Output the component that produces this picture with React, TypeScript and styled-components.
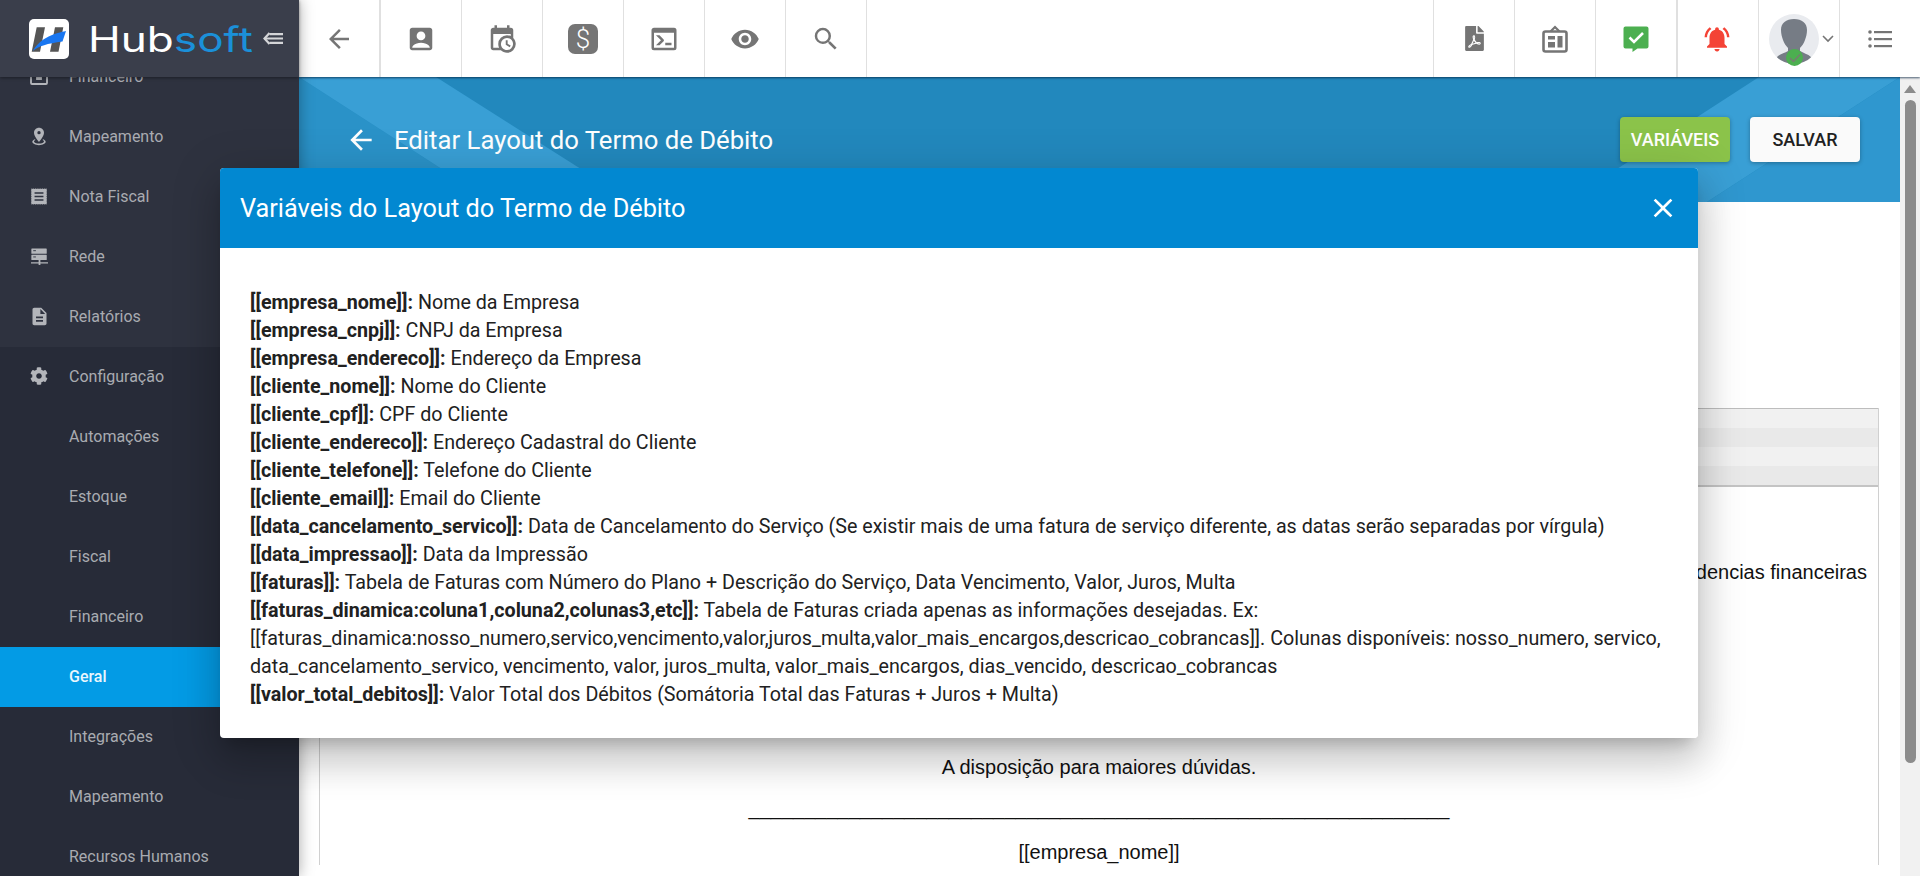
import styled, { createGlobalStyle } from 'styled-components';
import { MdAccountBox, MdArrowBack, MdClose, MdDescription, MdNotificationsActive, MdSearch, MdVisibility } from 'react-icons/md';
import { FaCog, FaFilePdf } from 'react-icons/fa';

const GlobalStyle = createGlobalStyle`
  html, body { margin: 0; padding: 0; height: 100%; background: #fff; overflow: hidden; }
  body { font-family: Roboto, "Liberation Sans", sans-serif; }
  * { box-sizing: border-box; }
`;

const Shell = styled.div`
  display: flex;
  width: 100vw;
  height: 100vh;
  overflow: hidden;
`;

/* ---------- sidebar ---------- */
const Sidebar = styled.aside`
  width: 299px;
  flex: none;
  display: flex;
  flex-direction: column;
  background: #272b38;
  box-shadow: 0 0 14px rgba(0, 0, 0, 0.35);
  position: relative;
  z-index: 3;
`;

const Brand = styled.div`
  height: 77px;
  flex: none;
  display: flex;
  align-items: center;
  gap: 19px;
  padding-left: 29px;
  background: #3a3e4b;
  box-shadow: 0 1px 3px rgba(0, 0, 0, 0.4);
  position: relative;
  z-index: 1;
`;

const LogoMark = styled.svg`
  width: 40px;
  height: 40px;
  flex: none;
`;

const Wordmark = styled.div`
  width: 164px;
  flex: none;
  font-family: Inter, sans-serif;
  font-size: 35px;
  font-weight: 400;
  line-height: 40px;
  color: #fff;
  white-space: nowrap;
  transform: scaleX(1.26);
  transform-origin: left center;
  margin-right: -8px;
  span { color: #1b90d9; }
`;

const NavScroll = styled.nav`
  flex: 1;
  overflow: hidden;
`;

const NavList = styled.ul`
  list-style: none;
  margin: -30px 0 0;
  padding: 0;
`;

const NavRow = styled.li<{ $raised?: boolean; $active?: boolean }>`
  height: 60px;
  display: flex;
  align-items: center;
  gap: 18px;
  padding: 0 0 2px 27px;
  font-size: 16px;
  color: ${({ $active }) => ($active ? '#eaf6fd' : '#a9abb1')};
  font-weight: ${({ $active }) => ($active ? 500 : 400)};
  background: ${({ $active, $raised }) => ($active ? '#039be5' : $raised ? '#2e323f' : '#272b38')};
`;

const NavIcon = styled.span`
  width: 24px;
  height: 24px;
  flex: none;
  display: flex;
  align-items: center;
  justify-content: center;
  color: #b3b5ba;
`;

/* ---------- top bar ---------- */
const Main = styled.div`
  flex: 1;
  min-width: 0;
  display: flex;
  flex-direction: column;
`;

const TopBar = styled.header`
  height: 77px;
  flex: none;
  display: flex;
  justify-content: space-between;
  background: #fff;
  box-shadow: 0 1px 2px rgba(0, 30, 60, 0.7);
  position: relative;
  z-index: 2;
`;

const BarGroup = styled.div`
  display: flex;
`;

const BarCell = styled.div<{ $side?: 'left' | 'right'; $wide?: boolean }>`
  width: ${({ $wide }) => ($wide ? 82 : 81)}px;
  height: 77px;
  display: flex;
  align-items: center;
  justify-content: center;
  color: #757575;
  ${({ $side, $wide }) =>
    $side === 'right'
      ? `border-left: ${$wide ? 2 : 1}px solid #e0e0e0;`
      : `border-right: ${$wide ? 2 : 1}px solid #e0e0e0;`}
`;

const BellSlot = styled.span`
  display: flex;
  margin-right: 3px;
`;

const DollarBadge = styled.span`
  width: 30px;
  height: 30px;
  border-radius: 7px;
  background: #757575;
  color: #fff;
  font-size: 26px;
  font-weight: 300;
  line-height: 30px;
  text-align: center;
`;

const AvatarCell = styled(BarCell)`
  position: relative;
  justify-content: flex-start;
  padding-left: 10px;
  gap: 2px;
`;

const AvatarDisc = styled.svg`
  width: 50px;
  height: 50px;
  border-radius: 50%;
  background: #e9ebef;
  flex: none;
`;

const OnlineBadge = styled.span`
  position: absolute;
  left: 27px;
  top: 49px;
  width: 17px;
  height: 17px;
  border-radius: 50%;
  background: #4caf50;
  display: flex;
  align-items: center;
  justify-content: center;
`;

/* ---------- page ---------- */
const Viewport = styled.div`
  flex: 1;
  min-height: 0;
  display: flex;
`;

const Page = styled.main`
  flex: 1;
  min-width: 0;
  overflow: hidden;
`;

const Banner = styled.section`
  height: 125px;
  display: flex;
  align-items: center;
  padding: 0 40px 0 46px;
  background: #2288bd;
  color: #fff;
  position: relative;
`;

const BannerArt = styled.svg`
  position: absolute;
  inset: 0;
  width: 100%;
  height: 100%;
`;

const BannerTitle = styled.h1`
  flex: 1;
  margin: 0;
  display: flex;
  align-items: center;
  gap: 17px;
  font-size: 25.7px;
  font-weight: 400;
  position: relative;
`;

const BannerActions = styled.div`
  display: flex;
  gap: 20px;
  position: relative;
`;

const ActionButton = styled.button<{ $tone: 'green' | 'white' }>`
  width: 110px;
  height: 45px;
  border: 0;
  border-radius: 4px;
  padding: 0;
  font-family: Roboto, sans-serif;
  font-size: 18px;
  font-weight: 500;
  text-transform: uppercase;
  color: ${({ $tone }) => ($tone === 'green' ? '#fff' : '#212121')};
  background: ${({ $tone }) => ($tone === 'green' ? '#8bc34a' : '#fafafa')};
  box-shadow: 0 1px 4px rgba(0, 0, 0, 0.3);
`;

const Editor = styled.section`
  margin: 206px 21px 0 20px;
  border: 1px solid #d0d0d0;
  border-bottom: 0;
  font-family: "Liberation Sans", Arial, sans-serif;
  font-size: 20px;
  line-height: 26px;
  color: #111;
`;

const EditorTools = styled.div`
  height: 79px;
  display: flex;
  flex-direction: column;
  border-top: 1px solid #bdbdbd;
  border-bottom: 2px solid #c4c4c4;
  margin-top: -1px;
`;

const ToolStripe = styled.div<{ $dark?: boolean }>`
  flex: 1;
  background: ${({ $dark }) => ($dark ? '#e9e9e9' : '#f1f1f1')};
`;

const EditorBody = styled.div`
  padding: 72px 11px 0;
`;

const Paragraph = styled.p<{ $align?: 'center' | 'right'; $gap?: number }>`
  margin: ${({ $gap }) => $gap ?? 0}px 0 0;
  text-align: ${({ $align }) => $align ?? 'center'};
  white-space: nowrap;
`;

const ScrollTrack = styled.div`
  width: 20px;
  flex: none;
  display: flex;
  flex-direction: column;
  align-items: center;
  padding-top: 8px;
  gap: 7px;
  background: #f1f1f1;
`;

const ScrollThumb = styled.div`
  width: 11px;
  height: 663px;
  border-radius: 6px;
  background: #8c8c8c;
`;

const ScrollArrow = styled.svg`
  width: 12px;
  height: 8px;
  flex: none;
`;

/* ---------- modal ---------- */
const Modal = styled.div`
  position: fixed;
  left: 220px;
  top: 168px;
  width: 1478px;
  height: 570px;
  border-radius: 4px;
  background: #fff;
  overflow: hidden;
  z-index: 5;
`;

const ModalShadow = styled.div`
  position: fixed;
  left: 220px;
  top: 168px;
  width: 1478px;
  height: 570px;
  border-radius: 4px;
  z-index: 4;
  box-shadow: 0 11px 15px -7px rgba(0, 0, 0, 0.2), 0 24px 38px 3px rgba(0, 0, 0, 0.14), 0 9px 46px 8px rgba(0, 0, 0, 0.12);
`;

const ModalHeader = styled.header`
  height: 80px;
  display: flex;
  align-items: center;
  justify-content: space-between;
  padding: 0 19px 0 20px;
  background: #0288d1;
  color: #fff;
`;

const ModalTitle = styled.h2`
  margin: 0;
  font-size: 25.3px;
  font-weight: 400;
`;

const ModalBody = styled.div`
  padding: 41px 30px 29px;
  font-size: 19.7px;
  line-height: 28px;
  color: #212121;
`;

const VarLine = styled.div`
  b { font-weight: 700; }
`;

const variables: [string, string][] = [
  ['[[empresa_nome]]:', 'Nome da Empresa'],
  ['[[empresa_cnpj]]:', 'CNPJ da Empresa'],
  ['[[empresa_endereco]]:', 'Endereço da Empresa'],
  ['[[cliente_nome]]:', 'Nome do Cliente'],
  ['[[cliente_cpf]]:', 'CPF do Cliente'],
  ['[[cliente_endereco]]:', 'Endereço Cadastral do Cliente'],
  ['[[cliente_telefone]]:', 'Telefone do Cliente'],
  ['[[cliente_email]]:', 'Email do Cliente'],
  ['[[data_cancelamento_servico]]:', 'Data de Cancelamento do Serviço (Se existir mais de uma fatura de serviço diferente, as datas serão separadas por vírgula)'],
  ['[[data_impressao]]:', 'Data da Impressão'],
  ['[[faturas]]:', 'Tabela de Faturas com Número do Plano + Descrição do Serviço, Data Vencimento, Valor, Juros, Multa'],
  ['[[faturas_dinamica:coluna1,coluna2,colunas3,etc]]:', 'Tabela de Faturas criada apenas as informações desejadas. Ex: [[faturas_dinamica:nosso_numero,servico,vencimento,valor,juros_multa,valor_mais_encargos,descricao_cobrancas]]. Colunas disponíveis: nosso_numero, servico, data_cancelamento_servico, vencimento, valor, juros_multa, valor_mais_encargos, dias_vencido, descricao_cobrancas'],
  ['[[valor_total_debitos]]:', 'Valor Total dos Débitos (Somátoria Total das Faturas + Juros + Multa)'],
];

const Mdi = ({ d, size = 30 }: { d: string; size?: number }) => (
  <svg width={size} height={size} viewBox="0 0 24 24" fill="currentColor">
    <path d={d} />
  </svg>
);

const CALENDAR_CLOCK = 'M15,13H16.5V15.82L18.94,17.23L18.19,18.53L15,16.69V13M19,8H5V19H9.67C9.24,18.09 9,17.07 9,16A7,7 0 0,1 16,9C17.07,9 18.09,9.24 19,9.67V8M5,21C3.89,21 3,20.1 3,19V5C3,3.89 3.89,3 5,3H6V1H8V3H16V1H18V3H19A2,2 0 0,1 21,5V11.1C22.24,12.36 23,14.09 23,16A7,7 0 0,1 16,23C14.09,23 12.36,22.24 11.1,21H5M16,11.15A4.85,4.85 0 0,0 11.15,16C11.15,18.68 13.32,20.85 16,20.85A4.85,4.85 0 0,0 20.85,16C20.85,13.32 18.68,11.15 16,11.15Z';
const CONSOLE = 'M20,19V7H4V19H20M20,3A2,2 0 0,1 22,5V19A2,2 0 0,1 20,21H4A2,2 0 0,1 2,19V5C2,3.89 2.9,3 4,3H20M13,17V15H18V17H13M9.58,13L5.57,9H8.4L11.7,12.3C12.09,12.69 12.09,13.33 11.7,13.72L8.42,17H5.59L9.58,13Z';
const MAP_MARKER_RADIUS = 'M12,2C15.31,2 18,4.66 18,7.95C18,12.41 12,19 12,19C12,19 6,12.41 6,7.95C6,4.66 8.69,2 12,2M12,6A2,2 0 0,0 10,8A2,2 0 0,0 12,10A2,2 0 0,0 14,8A2,2 0 0,0 12,6M20,19C20,21.21 16.42,23 12,23C7.58,23 4,21.21 4,19C4,17.71 5.22,16.56 7.11,15.83L7.75,16.74C6.67,17.19 6,17.81 6,18.5C6,19.88 8.69,21 12,21C15.31,21 18,19.88 18,18.5C18,17.81 17.33,17.19 16.25,16.74L16.89,15.83C18.78,16.56 20,17.71 20,19Z';

const BoardIcon = () => (
  <svg width="26" height="28" viewBox="0 0 26 28" fill="none">
    <path d="M8.5 6.5 13 2l4.5 4.5" stroke="#757575" strokeWidth="2.2" />
    <rect x="1.5" y="6.5" width="23" height="20" rx="2" stroke="#757575" strokeWidth="2.6" />
    <rect x="6" y="11" width="7" height="3.5" fill="#757575" />
    <rect x="6" y="17" width="7" height="5.5" fill="#757575" />
    <rect x="15.5" y="11" width="5" height="11.5" fill="#757575" />
  </svg>
);

const ChatCheckIcon = () => (
  <svg width="26" height="26" viewBox="0 0 26 26">
    <path d="M2.5 0.5h21a2 2 0 0 1 2 2v18a2 2 0 0 1-2 2h-9l-5 3.5v-3.5h-7a2 2 0 0 1-2-2v-18a2 2 0 0 1 2-2z" fill="#4caf50" />
    <path d="M6.5 11.5l4.5 4.5 9-9" fill="none" stroke="#fff" strokeWidth="2.6" />
  </svg>
);

const ListIcon = () => (
  <svg width="24" height="18" viewBox="0 0 24 18" fill="#757575">
    <circle cx="2" cy="2" r="1.8" />
    <circle cx="2" cy="9" r="1.8" />
    <circle cx="2" cy="16" r="1.8" />
    <rect x="6" y="1" width="18" height="2.2" />
    <rect x="6" y="8" width="18" height="2.2" />
    <rect x="6" y="15" width="18" height="2.2" />
  </svg>
);

const CollapseIcon = () => (
  <svg width="20" height="13" viewBox="0 0 20 13" fill="none" stroke="#d4d5d8" strokeWidth="2.2">
    <path d="M6.5 1 1.500 6.500 6.500 12" />
    <path d="M1.500 6.500H20M6.500 2.200H20M6.500 10.800H20" />
  </svg>
);

const ReceiptIcon = () => (
  <svg width="16" height="17" viewBox="0 0 18 18">
    <rect x="0.5" y="0.5" width="17" height="17" fill="#b3b5ba" stroke="#b3b5ba" strokeDasharray="1 1" />
    <path d="M4 5h10M4 9h10M4 13h10" stroke="#2e323f" strokeWidth="1.7" />
  </svg>
);

const ServerIcon = () => (
  <svg width="17" height="17" viewBox="0 0 19 19" fill="#b3b5ba">
    <path d="M1 0.5h16a.6.6 0 0 1 .6.6v4.8a.6.6 0 0 1-.6.6H1a.6.6 0 0 1-.6-.6V1.100a.6.6 0 0 1 .6-.6zM1 7.500h16a.6.6 0 0 1 .6.6v4.800a.6.6 0 0 1-.6.6H1a.6.6 0 0 1-.6-.6V8.100a.6.6 0 0 1 .6-.6z" />
    <path d="M8.500 13.500h2v2.500H19v1.300h-8.500V19h-2v-1.700H0V16h8.500z" />
    <path d="M2.500 3h3M2.500 10h3" stroke="#2e323f" strokeWidth="1" />
  </svg>
);

const TillIcon = () => (
  <svg width="18" height="18" viewBox="0 0 18 18" fill="none" stroke="#b3b5ba" strokeWidth="1.8">
    <rect x="1" y="1" width="16" height="16" rx="1" />
    <rect x="7" y="6" width="4" height="6" fill="#b3b5ba" />
  </svg>
);

const mainRows = [
  { label: 'Financeiro', icon: <TillIcon /> },
  { label: 'Mapeamento', icon: <Mdi d={MAP_MARKER_RADIUS} size={20} /> },
  { label: 'Nota Fiscal', icon: <ReceiptIcon /> },
  { label: 'Rede', icon: <ServerIcon /> },
  { label: 'Relatórios', icon: <MdDescription size={21} /> },
];

const subRows = ['Automações', 'Estoque', 'Fiscal', 'Financeiro', 'Geral', 'Integrações', 'Mapeamento', 'Recursos Humanos'];

const App = () => {
  const rule = '_'.repeat(63);

  return (
    <>
      <GlobalStyle />
      <Shell>
        <Sidebar>
          <Brand>
            <LogoMark viewBox="0 0 40 40">
              <rect width="40" height="40" rx="5" fill="#fff" />
              <path d="M7.700 8.300H16L11 32.700H2.700zM26 8.300h8.300L29.500 32.700H21z" fill="#555" />
              <path d="M37 12C27 14 12 18 3.700 32C10 27 18 24.500 33.500 22.500z" fill="#1976f0" />
            </LogoMark>
            <Wordmark>Hub<span>soft</span></Wordmark>
            <CollapseIcon />
          </Brand>
          <NavScroll>
            <NavList>
              {mainRows.map((row) => (
                <NavRow key={row.label} $raised>
                  <NavIcon>{row.icon}</NavIcon>
                  {row.label}
                </NavRow>
              ))}
              <NavRow>
                <NavIcon><FaCog size={18} /></NavIcon>
                Configuração
              </NavRow>
              {subRows.map((label) => (
                <NavRow key={label} $active={label === 'Geral'}>
                  <NavIcon />
                  {label}
                </NavRow>
              ))}
            </NavList>
          </NavScroll>
        </Sidebar>

        <Main>
          <TopBar>
            <BarGroup>
              <BarCell $wide><MdArrowBack size={30} /></BarCell>
              <BarCell><MdAccountBox size={30} /></BarCell>
              <BarCell><Mdi d={CALENDAR_CLOCK} /></BarCell>
              <BarCell><DollarBadge>$</DollarBadge></BarCell>
              <BarCell><Mdi d={CONSOLE} /></BarCell>
              <BarCell><MdVisibility size={30} /></BarCell>
              <BarCell><MdSearch size={30} /></BarCell>
            </BarGroup>
            <BarGroup>
              <BarCell $side="right"><FaFilePdf size={25} /></BarCell>
              <BarCell $side="right"><BoardIcon /></BarCell>
              <BarCell $side="right"><ChatCheckIcon /></BarCell>
              <BarCell $side="right" $wide>
                <BellSlot><MdNotificationsActive size={30} color="#f44336" /></BellSlot>
              </BarCell>
              <AvatarCell $side="right">
                <AvatarDisc viewBox="0 0 50 50">
                  <path d="M25 5c8 0 13 4 13 11 0 4-1 7-2 10-1 3-3 6-5 8v3c3 2 8 3 11 6v7H8v-7c3-3 8-4 11-6v-3c-2-2-4-5-5-8-1-3-2-6-2-10 0-7 5-11 13-11z" fill="#767c85" />
                </AvatarDisc>
                <svg width="14" height="10" viewBox="0 0 14 10" fill="none" stroke="#757575" strokeWidth="1.6">
                  <path d="M2 2l5 5 5-5" />
                </svg>
                <OnlineBadge>
                  <svg width="12" height="10" viewBox="0 0 12 10" fill="none" stroke="#767c70" strokeWidth="1.5">
                    <path d="M1 5l3.500 3.500L11 1.500" />
                  </svg>
                </OnlineBadge>
              </AvatarCell>
              <BarCell $side="right"><ListIcon /></BarCell>
            </BarGroup>
          </TopBar>

          <Viewport>
            <Page>
              <Banner>
                <BannerArt viewBox="0 0 1601 125" preserveAspectRatio="none">
                  <polygon points="0,0 194,125 0,125" fill="#2a92c8" />
                  <polygon points="0,0 137,0 334,125 194,125" fill="#399fd5" />
                  <polygon points="1460,0 1601,0 1408,125 1267,125" fill="#399fd5" />
                  <polygon points="1601,0 1601,125 1408,125" fill="#2f97cf" />
                </BannerArt>
                <BannerTitle>
                  <MdArrowBack size={32} />
                  Editar Layout do Termo de Débito
                </BannerTitle>
                <BannerActions>
                  <ActionButton $tone="green">Variáveis</ActionButton>
                  <ActionButton $tone="white">Salvar</ActionButton>
                </BannerActions>
              </Banner>

              <Editor>
                <EditorTools>
                  <ToolStripe />
                  <ToolStripe $dark />
                  <ToolStripe />
                  <ToolStripe $dark />
                </EditorTools>
                <EditorBody>
                  <Paragraph $align="right">Informamos que existem em seu cadastro pendencias financeiras</Paragraph>
                  <Paragraph $gap={169}>A disposição para maiores dúvidas.</Paragraph>
                  <Paragraph $gap={15}>{rule}</Paragraph>
                  <Paragraph $gap={18}>[[empresa_nome]]</Paragraph>
                </EditorBody>
              </Editor>
            </Page>
            <ScrollTrack>
              <ScrollArrow viewBox="0 0 12 8"><polygon points="6,0 12,8 0,8" fill="#8c8c8c" /></ScrollArrow>
              <ScrollThumb />
            </ScrollTrack>
          </Viewport>
        </Main>

        <ModalShadow />
        <Modal>
          <ModalHeader>
            <ModalTitle>Variáveis do Layout do Termo de Débito</ModalTitle>
            <MdClose size={32} />
          </ModalHeader>
          <ModalBody>
            {variables.map(([name, text]) => (
              <VarLine key={name}>
                <b>{name}</b> {text}
              </VarLine>
            ))}
          </ModalBody>
        </Modal>
      </Shell>
    </>
  );
};

export default App;
